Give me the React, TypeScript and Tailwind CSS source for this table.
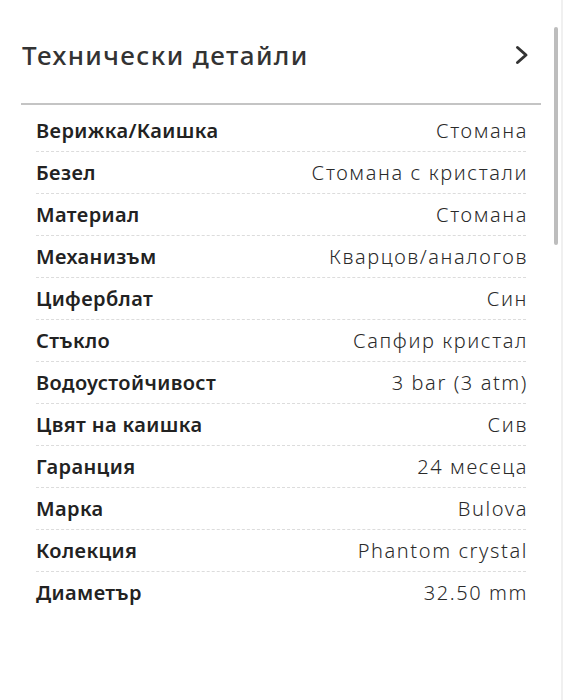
const SPECS: [string, string][] = [
  ["Верижка/Каишка", "Стомана"],
  ["Безел", "Стомана с кристали"],
  ["Материал", "Стомана"],
  ["Механизъм", "Кварцов/аналогов"],
  ["Циферблат", "Син"],
  ["Стъкло", "Сапфир кристал"],
  ["Водоустойчивост", "3 bar (3 atm)"],
  ["Цвят на каишка", "Сив"],
  ["Гаранция", "24 месеца"],
  ["Марка", "Bulova"],
  ["Колекция", "Phantom crystal"],
  ["Диаметър", "32.50 mm"],
];

export default function App() {
  return (
    <div
      lang="bg"
      className="relative h-[700px] w-[563px] overflow-hidden bg-white font-['Noto_Sans',sans-serif]"
    >
      <div className="ml-[21px] w-[520px] pt-[35px]">
        <div className="flex h-[40px] items-center justify-between pl-[1px] pr-[13px]">
          <h2 className="text-[26px] font-medium tracking-[1.4px] text-[#333]">Технически детайли</h2>
          <svg width="14" height="20" viewBox="0 0 14 20" fill="none" className="mr-[-1px]">
            <polyline
              points="2.5,2.5 11,10 2.5,17.5"
              stroke="#333"
              strokeWidth="3"
              strokeLinecap="round"
              strokeLinejoin="round"
            />
          </svg>
        </div>
        <div className="mt-[28px] h-[2px] bg-[#c4c4c4]" />
        <div className="mt-[5px] px-[15px]">
          {SPECS.map(([label, value], i) => (
            <div
              key={label}
              className={
                i < SPECS.length - 1
                  ? "flex h-[42px] items-center justify-between border-b border-dashed border-[#dcdcdc]"
                  : "flex h-[42px] items-center justify-between"
              }
            >
              <span className="text-[20px] font-semibold tracking-[0.4px] text-[#222]">{label}</span>
              <span className="mr-[-2px] text-[20px] font-light tracking-[1.6px] text-[#2a2a2a]">{value}</span>
            </div>
          ))}
        </div>
      </div>

      {/* scrollbar */}
      <div className="absolute right-0 top-0 h-full w-[2px] bg-[#f0f0f0]" />
      <div className="absolute left-[554px] top-[27px] h-[218px] w-[4px] rounded-full bg-[#bdbdbd]" />
    </div>
  );
}
